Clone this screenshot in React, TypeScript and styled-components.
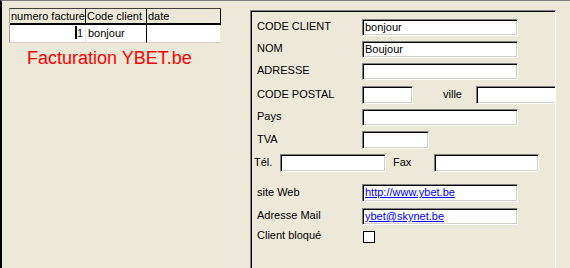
import React from "react";
import styled, { createGlobalStyle } from "styled-components";

const GlobalStyle = createGlobalStyle`
  html, body { margin: 0; padding: 0; background: #ece9d8; overflow: hidden; }
  body { font-family: "Liberation Sans", Arial, sans-serif; font-size: 11px; color: #000; }
`;

const Screen = styled.div`
  display: flex;
  width: 570px;
  height: 268px;
  box-sizing: border-box;
  border-top: 1px solid #808080;
  border-left: 2px solid #000;
  background: #ece9d8;
  overflow: hidden;
`;

const LeftPane = styled.div`
  width: 248px;
  flex: none;
  display: flex;
  flex-direction: column;
  padding: 7px 0 0 7px;
  box-sizing: border-box;
`;

const Grid = styled.div`
  display: grid;
  grid-template-columns: 76px 61px 74px;
  width: 211px;
  border-top: 1px solid #404040;
  border-left: 1px solid #a0a0a0;
`;

const HeadCell = styled.div`
  height: 14px;
  line-height: 14px;
  padding-left: 1px;
  border-right: 1px solid #000;
  border-bottom: 2px solid #000;
  white-space: nowrap;
  overflow: hidden;
  background: #ece9d8;
`;

const DataCell = styled.div<{ $align?: string; $edge?: string }>`
  height: 17px;
  line-height: 17px;
  background: #fff;
  padding: 0 2px 0 2px;
  text-align: ${(p) => p.$align || "left"};
  border-right: 1px solid ${(p) => p.$edge || "#d4d0c8"};
  border-bottom: 1px solid #d4d0c8;
  white-space: nowrap;
  overflow: hidden;
`;

const Caret = styled.span`
  display: inline-block;
  width: 2px;
  height: 13px;
  background: #000;
  vertical-align: -2px;
`;

const Brand = styled.div`
  margin: 5px 0 0 18px;
  color: #ff0000;
  font-size: 18px;
  line-height: 21px;
  white-space: nowrap;
`;

const Panel = styled.div`
  margin-top: 9px;
  width: 306px;
  height: 280px;
  flex: none;
  box-sizing: border-box;
  border-style: solid;
  border-width: 1px;
  border-color: #808080 #fff #fff #808080;
  box-shadow: inset 1px 1px #000;
  padding-left: 6px;
  display: flex;
  flex-direction: column;
  overflow: hidden;
`;

const Row = styled.div<{ $mt: number; $h: number }>`
  display: flex;
  align-items: center;
  margin-top: ${(p) => p.$mt}px;
  height: ${(p) => p.$h}px;
  white-space: nowrap;
`;

const Label = styled.div<{ $w: number; $indent?: number }>`
  width: ${(p) => p.$w}px;
  flex: none;
  margin-left: ${(p) => p.$indent || 0}px;
  margin-top: -3px;
`;

const Field = styled.div<{ $w: number; $link?: boolean }>`
  width: ${(p) => p.$w}px;
  height: 100%;
  flex: none;
  box-sizing: border-box;
  background: #fff;
  border-style: solid;
  border-width: 1px;
  border-color: #808080 #fff #fff #808080;
  box-shadow: inset 1px 1px #000, inset -1px -1px #d4d0c8;
  padding: 0 2px;
  line-height: 15px;
  color: ${(p) => (p.$link ? "#0000ff" : "#000")};
  text-decoration: ${(p) => (p.$link ? "underline" : "none")};
  overflow: hidden;
`;

const Check = styled.div`
  width: 12px;
  height: 12px;
  box-sizing: border-box;
  border: 1px solid #000;
  background: #fff;
  margin-top: 1px;
`;

export default function App() {
  return (
    <>
      <GlobalStyle />
      <Screen>
        <LeftPane>
          <Grid>
            <HeadCell>numero facture</HeadCell>
            <HeadCell>Code client</HeadCell>
            <HeadCell>date</HeadCell>
            <DataCell $align="right" $edge="#ece9d8">
              <Caret />1
            </DataCell>
            <DataCell $edge="#000">bonjour</DataCell>
            <DataCell $edge="#ece9d8"></DataCell>
          </Grid>
          <Brand>Facturation YBET.be</Brand>
        </LeftPane>
        <Panel>
          <Row $mt={8} $h={17}>
            <Label $w={105}>CODE CLIENT</Label>
            <Field $w={156}>bonjour</Field>
          </Row>
          <Row $mt={5} $h={17}>
            <Label $w={105}>NOM</Label>
            <Field $w={156}>Boujour</Field>
          </Row>
          <Row $mt={5} $h={17}>
            <Label $w={105}>ADRESSE</Label>
            <Field $w={156} />
          </Row>
          <Row $mt={6} $h={18}>
            <Label $w={105}>CODE POSTAL</Label>
            <Field $w={51} />
            <Label $w={33} $indent={30}>ville</Label>
            <Field $w={90} />
          </Row>
          <Row $mt={5} $h={17}>
            <Label $w={105}>Pays</Label>
            <Field $w={156} />
          </Row>
          <Row $mt={5} $h={18}>
            <Label $w={105}>TVA</Label>
            <Field $w={67} />
          </Row>
          <Row $mt={5} $h={18}>
            <Label $w={26} $indent={-3}>Tél.</Label>
            <Field $w={106} />
            <Label $w={41} $indent={7}>Fax</Label>
            <Field $w={105} />
          </Row>
          <Row $mt={12} $h={18}>
            <Label $w={105}>site Web</Label>
            <Field $w={156} $link>http://www.ybet.be</Field>
          </Row>
          <Row $mt={6} $h={17}>
            <Label $w={105}>Adresse Mail</Label>
            <Field $w={156} $link>ybet@skynet.be</Field>
          </Row>
          <Row $mt={3} $h={16}>
            <Label $w={106}>Client bloqué</Label>
            <Check />
          </Row>
        </Panel>
      </Screen>
    </>
  );
}
